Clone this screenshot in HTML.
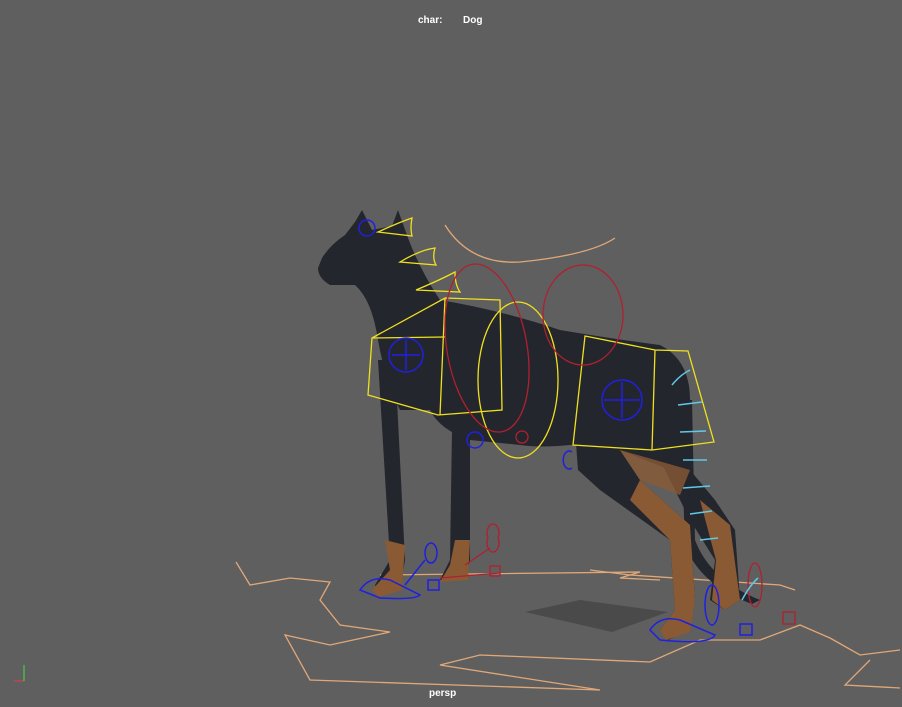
<!DOCTYPE html>
<html><head><style>
html,body{margin:0;padding:0;background:#5f5f5f;}
body{width:902px;height:707px;overflow:hidden;position:relative;font-family:"Liberation Sans",sans-serif;}
.t{position:absolute;color:#fff;font-size:10px;font-weight:bold;}
</style></head><body>
<div class="t" style="left:418px;top:15px">char:</div>
<div class="t" style="left:463px;top:15px">Dog</div>
<div class="t" style="left:429px;top:688px">persp</div>
<svg width="902" height="707" style="position:absolute;left:0;top:0">
<defs>
<linearGradient id="tan" x1="0" y1="0" x2="0" y2="1"><stop offset="0" stop-color="#3a3c44"/><stop offset="0.55" stop-color="#5a4030"/><stop offset="1" stop-color="#a06a3a"/></linearGradient>
</defs>
<!-- floor lines -->
<g fill="none" stroke="#e0a878" stroke-width="1.3">
<path d="M236,562 L250,585 L290,578 L330,582 L320,600 L340,625 L390,632 L330,645 L285,635 L310,680 L600,690 L440,665 L480,655 L650,662 L700,640 L760,640 L800,625 L830,638 L860,655 L900,650"/>
<path d="M380,575 L640,572 L620,578 L660,580"/>
<path d="M590,570 L630,575 L780,585 L795,590"/>
<path d="M870,660 L845,685 L900,688"/>
<path d="M445,225 Q470,265 520,262 Q590,255 615,238"/>
</g>
<polygon points="525,612 580,600 668,612 612,632" fill="#4a4a4a"/>
<!-- dog body -->
<g fill="#24262d">
<path d="M322,258 Q330,245 345,235 L355,222 L362,210 L372,230 L392,226 L398,210 L408,238 Q420,270 440,300 Q500,310 560,330 Q620,340 660,345 Q690,360 690,400 L690,460 Q680,475 670,470 L620,450 L600,445 L570,445 Q540,448 520,445 L470,440 Q440,430 430,410 L400,410 Q385,380 378,340 Q372,300 355,285 L330,285 Q318,278 318,268 Z"/>
<path d="M378,360 L395,360 L405,560 L400,590 L378,595 L375,585 L390,560 Z" />
<path d="M440,405 L470,420 L470,560 L465,580 L440,580 L450,560 L452,430 Z"/>
<path d="M575,430 L620,450 L640,480 L690,525 L695,600 L690,630 L668,640 L660,630 L675,610 L670,540 L600,490 L578,470 Z"/>
<path d="M650,440 L690,470 L715,500 L735,530 L740,600 L725,610 L710,600 L715,560 L690,520 Z"/>
<path d="M680,400 L692,400 L695,540 Q710,580 760,600 L752,604 Q700,585 685,545 Z"/>
</g>
<g fill="#8a5a34">
<path d="M385,540 L405,545 L402,590 L378,597 L372,590 L390,570 Z"/>
<path d="M455,540 L470,540 L468,580 L440,582 L450,565 Z"/>
<path d="M640,480 L690,525 L695,600 L690,632 L666,640 L660,630 L675,610 L670,540 L630,500 Z"/>
<path d="M700,500 L730,525 L740,600 L725,610 L712,600 L716,560 Z"/>
<path d="M620,450 L690,470 L680,495 L640,480 Z" opacity="0.8"/>
</g>
<!-- yellow boxes -->
<g fill="none" stroke="#f0e020" stroke-width="1.3">
<path d="M372,338 L445,298 L500,300 L502,410 L438,415 L368,395 Z M445,298 L440,415 M372,338 L445,337"/>
<path d="M585,336 L655,350 L688,351 L714,442 L652,450 L573,445 Z M655,350 L652,450"/>
<ellipse cx="518" cy="380" rx="40" ry="78"/>
<path d="M378,232 Q400,222 412,218 Q410,228 412,236 Z"/>
<path d="M400,262 Q420,250 435,248 Q432,258 436,265 Z"/>
<path d="M416,290 Q440,280 455,272 Q455,285 460,292 Z"/>
</g>
<g fill="none" stroke="#b02030" stroke-width="1.3">
<ellipse cx="487" cy="348" rx="40" ry="85" transform="rotate(-10 487 348)"/>
<ellipse cx="583" cy="315" rx="40" ry="50"/>
<circle cx="522" cy="437" r="6"/>
<path d="M465,565 L490,548 M488,538 a6,9 0 1,0 10,0 a6,9 0 1,0 -10,0 M440,578 L500,573"/>
<rect x="490" y="566" width="10" height="10"/>
<rect x="783" y="612" width="12" height="12"/>
<ellipse cx="755" cy="585" rx="7" ry="22"/>
</g>
<g fill="none" stroke="#2020e0" stroke-width="1.5">
<circle cx="406" cy="355" r="17"/><path d="M406,340 V370 M392,355 H420"/>
<circle cx="622" cy="400" r="20"/><path d="M622,382 V418 M604,400 H640"/>
<circle cx="475" cy="440" r="8"/>
<path d="M572,452 a6,9 0 1,0 0,16"/>
<circle cx="367" cy="228" r="8"/>
<path d="M360,590 Q370,575 390,580 L420,595 Q415,600 380,598 Z M405,585 L425,560 M425,553 a6,10 0 1,0 12,0 a6,10 0 1,0 -12,0"/>
<rect x="428" y="580" width="11" height="10"/>
<path d="M650,630 Q660,615 680,620 L715,635 Q710,645 660,640 Z M705,605 a7,20 0 1,0 14,0 a7,20 0 1,0 -14,0"/>
<rect x="740" y="624" width="12" height="11"/>
</g>
<g fill="none" stroke="#60c8e8" stroke-width="1.5">
<path d="M672,385 Q680,375 690,370 M678,405 L702,402 M680,432 L706,431 M683,460 L707,460 M683,488 L710,486 M690,514 L712,511 M700,540 L718,538 M742,600 Q750,585 758,578"/>
</g>
<g stroke-width="1"><path d="M14,681 L24,681" stroke="#e04040"/><path d="M24,681 L24,665" stroke="#40e040"/></g>
</svg>
</body></html>
